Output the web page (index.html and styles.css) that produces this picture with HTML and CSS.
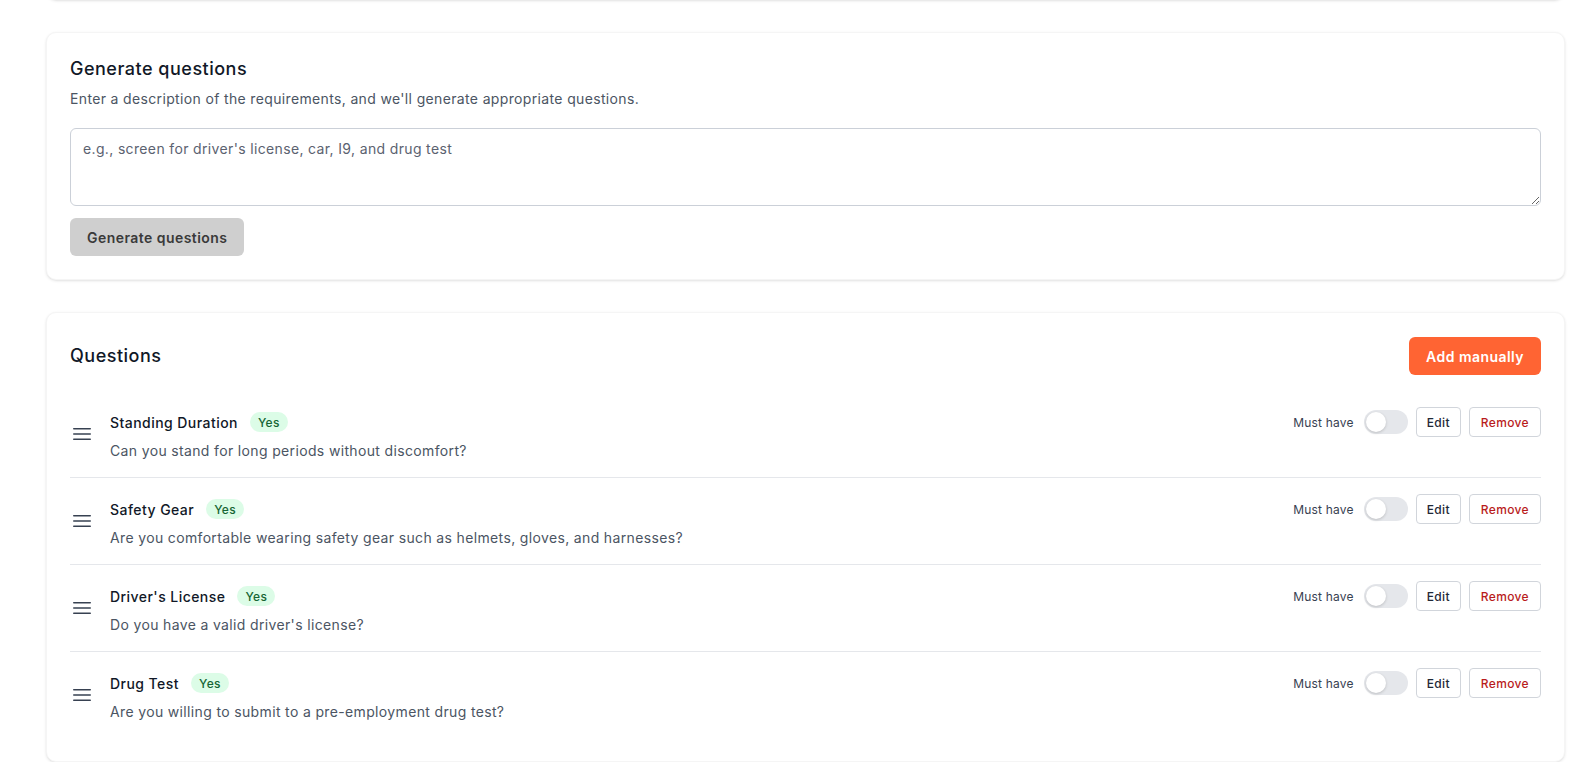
FILE: index.html
```html
<!DOCTYPE html>
<html lang="en">
<head>
<meta charset="utf-8">
<title>Questions</title>
<link rel="stylesheet" href="styles.css">
</head>
<body>
<div class="page">
  <div class="card card-prev"></div>

  <section class="card">
    <h2 class="card-title">Generate questions</h2>
    <p class="card-sub">Enter a description of the requirements, and we'll generate appropriate questions.</p>
    <textarea class="prompt" placeholder="e.g., screen for driver's license, car, I9, and drug test"></textarea>
    <button class="btn btn-disabled" type="button">Generate questions</button>
  </section>

  <section class="card">
    <div class="card-head">
      <h2 class="card-title">Questions</h2>
      <button class="btn btn-primary" type="button">Add manually</button>
    </div>
    <ul class="qlist">
      <li class="qrow">
        <span class="handle"><svg viewBox="0 0 24 24" width="24" height="24" fill="none" stroke="currentColor" stroke-width="1.5" stroke-linecap="round"><path d="M3.75 6.75h16.5M3.75 12h16.5M3.75 17.25h16.5"/></svg></span>
        <div class="qbody">
          <div class="qtop">
            <div class="qname"><span class="qtitle">Standing Duration</span><span class="badge">Yes</span></div>
            <div class="qctrl">
              <span class="must">Must have</span>
              <span class="toggle"><span class="knob"></span></span>
              <button class="sbtn" type="button">Edit</button>
              <button class="sbtn sbtn-danger" type="button">Remove</button>
            </div>
          </div>
          <p class="qtext">Can you stand for long periods without discomfort?</p>
        </div>
      </li>
      <li class="qrow">
        <span class="handle"><svg viewBox="0 0 24 24" width="24" height="24" fill="none" stroke="currentColor" stroke-width="1.5" stroke-linecap="round"><path d="M3.75 6.75h16.5M3.75 12h16.5M3.75 17.25h16.5"/></svg></span>
        <div class="qbody">
          <div class="qtop">
            <div class="qname"><span class="qtitle">Safety Gear</span><span class="badge">Yes</span></div>
            <div class="qctrl">
              <span class="must">Must have</span>
              <span class="toggle"><span class="knob"></span></span>
              <button class="sbtn" type="button">Edit</button>
              <button class="sbtn sbtn-danger" type="button">Remove</button>
            </div>
          </div>
          <p class="qtext">Are you comfortable wearing safety gear such as helmets, gloves, and harnesses?</p>
        </div>
      </li>
      <li class="qrow">
        <span class="handle"><svg viewBox="0 0 24 24" width="24" height="24" fill="none" stroke="currentColor" stroke-width="1.5" stroke-linecap="round"><path d="M3.75 6.75h16.5M3.75 12h16.5M3.75 17.25h16.5"/></svg></span>
        <div class="qbody">
          <div class="qtop">
            <div class="qname"><span class="qtitle">Driver's License</span><span class="badge">Yes</span></div>
            <div class="qctrl">
              <span class="must">Must have</span>
              <span class="toggle"><span class="knob"></span></span>
              <button class="sbtn" type="button">Edit</button>
              <button class="sbtn sbtn-danger" type="button">Remove</button>
            </div>
          </div>
          <p class="qtext">Do you have a valid driver's license?</p>
        </div>
      </li>
      <li class="qrow">
        <span class="handle"><svg viewBox="0 0 24 24" width="24" height="24" fill="none" stroke="currentColor" stroke-width="1.5" stroke-linecap="round"><path d="M3.75 6.75h16.5M3.75 12h16.5M3.75 17.25h16.5"/></svg></span>
        <div class="qbody">
          <div class="qtop">
            <div class="qname"><span class="qtitle">Drug Test</span><span class="badge">Yes</span></div>
            <div class="qctrl">
              <span class="must">Must have</span>
              <span class="toggle"><span class="knob"></span></span>
              <button class="sbtn" type="button">Edit</button>
              <button class="sbtn sbtn-danger" type="button">Remove</button>
            </div>
          </div>
          <p class="qtext">Are you willing to submit to a pre-employment drug test?</p>
        </div>
      </li>
    </ul>
  </section>
</div>
</body>
</html>
```

FILE: styles.css
```css
* { box-sizing: border-box; }

html, body {
  margin: 0;
  background: #ffffff;
  font-family: Inter, "Noto Sans", "Liberation Sans", sans-serif;
  color: #111827;
  overflow: hidden;
  letter-spacing: 0.35px;
}

.page {
  display: flex;
  flex-direction: column;
  gap: 32px;
  padding: 0 9px 0 46px;
}

.card {
  background: #fff;
  border-radius: 10px;
  padding: 24px 23px 23px;
  box-shadow: 0 1px 3px rgba(0,0,0,0.10), 0 1px 2px -1px rgba(0,0,0,0.08);
  border: 1px solid #f5f5f5;
}

.card-prev {
  height: 100px;
  margin-top: -100px;
}

.card-title {
  margin: 0;
  font-size: 18px;
  line-height: 24px;
  font-weight: 500;
  color: #111827;
  letter-spacing: 0.5px;
}

.card-sub {
  margin: 8px 0 0;
  font-size: 14px;
  line-height: 20px;
  color: #4b5563;
}

.prompt {
  display: block;
  width: 100%;
  height: 78px;
  margin: 19px 0 0;
  padding: 10px 12px;
  border: 1px solid #cbd0d8;
  border-radius: 6px;
  font-family: inherit;
  font-size: 14px;
  line-height: 20px;
  letter-spacing: 0.35px;
  color: #111827;
  resize: vertical;
}
.prompt::placeholder { color: #5b6270; }

.btn {
  display: inline-flex;
  align-items: center;
  height: 38px;
  padding: 0 17px;
  border: 0;
  border-radius: 6px;
  font-family: inherit;
  font-size: 14px;
  font-weight: 600;
  letter-spacing: 0.45px;
}

.btn-disabled {
  margin-top: 12px;
  background: #cfcfcf;
  color: #3a3a3a;
}

.btn-primary {
  background: #ff6433;
  color: #fff;
}

.card-head {
  display: flex;
  justify-content: space-between;
  align-items: center;
  margin-bottom: 16px;
}

.qlist {
  list-style: none;
  margin: 0;
  padding: 0;
}

.qrow {
  display: flex;
  align-items: center;
  gap: 16px;
  padding: 16px 0;
  border-top: 1px solid #e5e7eb;
}
.qrow:first-child { border-top: 0; }

.handle {
  display: flex;
  width: 24px;
  height: 24px;
  color: #374151;
}

.qbody { flex: 1; min-width: 0; }

.qtop {
  display: flex;
  justify-content: space-between;
  align-items: center;
  height: 30px;
}

.qname {
  display: flex;
  align-items: center;
  gap: 12px;
}

.qtitle {
  font-size: 14px;
  font-weight: 500;
  color: #111827;
  letter-spacing: 0.45px;
}

.badge {
  display: inline-flex;
  align-items: center;
  height: 20px;
  padding: 0 8px;
  border-radius: 999px;
  background: #dcfce7;
  color: #166534;
  font-size: 12px;
  font-weight: 500;
}

.qctrl {
  display: flex;
  align-items: center;
  gap: 8px;
}

.must {
  font-size: 12px;
  color: #374151;
  letter-spacing: 0.2px;
  margin-right: 2px;
}

.toggle {
  display: flex;
  align-items: center;
  width: 44px;
  height: 24px;
  padding: 2px;
  border-radius: 999px;
  background: #e5e7eb;
}

.knob {
  width: 20px;
  height: 20px;
  border-radius: 50%;
  background: #fff;
  box-shadow: 0 1px 3px rgba(0,0,0,0.18);
}

.sbtn {
  height: 30px;
  padding: 0 10px;
  border: 1px solid #d1d5db;
  border-radius: 4px;
  background: #fff;
  font-family: inherit;
  font-size: 12px;
  font-weight: 500;
  letter-spacing: 0.35px;
  color: #1f2937;
}

.sbtn-danger { color: #b91c1c; padding: 0 11px; }

.qtext {
  margin: 4px 0 0;
  font-size: 14px;
  line-height: 20px;
  color: #4b5563;
}
```
